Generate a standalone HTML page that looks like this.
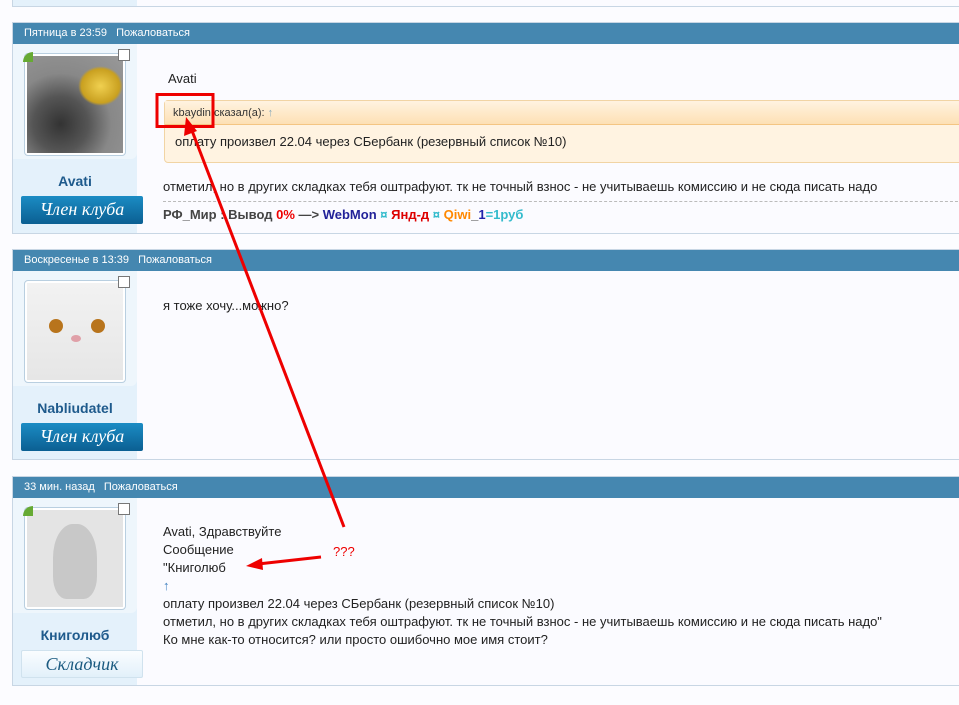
<!DOCTYPE html>
<html><head><meta charset="utf-8"><style>
*{margin:0;padding:0;box-sizing:border-box}
body{width:959px;height:705px;overflow:hidden;background:#fcfcff;font-family:"Liberation Sans",Arial,sans-serif;font-size:13px;color:#222;position:relative}
.post{position:absolute;left:12px;width:960px;border:1px solid #c8d6e4;background:#fbfbff}
.hd{height:21px;background:#4587b0;color:#fff;font-size:11px;line-height:21px;padding-left:11px}
.hd span{margin-left:6px}
.left{position:absolute;left:0;top:21px;bottom:0;width:124px;background:#e4f1fb}
.avbox{position:absolute;left:0;top:0;width:124px;height:115px;background:#eef6fc;border-radius:0 0 6px 0}
.av{position:absolute;left:11px;top:9px;width:102px;height:103px;border:1px solid #b9cfe0;border-radius:4px;background:#fff;padding:2px}
.av div{width:96px;height:97px}
.chk{position:absolute;left:105px;top:5px;width:12px;height:12px;border:1px solid #777;background:#fff}
.green{position:absolute;left:10px;top:8px;width:10px;height:10px;background:#6a3;border-radius:10px 0 0 0}
.name{position:absolute;left:0;top:129px;width:124px;text-align:center;color:#1e5a8c;font-weight:bold;font-size:14px}
.badge{position:absolute;left:8px;top:152px;width:122px;height:28px;background:linear-gradient(#1b8cc4,#0b5f92);color:#fff;font-family:"Liberation Serif",serif;font-style:italic;font-size:18px;text-align:center;line-height:27px;border-radius:2px}
.txt{position:absolute;left:150px;font-size:13px;color:#222}
</style></head><body>
<div style="position:absolute;left:12px;top:-2px;width:960px;height:9px;border:1px solid #c8d6e4;background:#fbfbff"><div style="width:124px;height:7px;background:#e4f1fb"></div></div>

<div class="post" style="top:22px;height:212px">
<div class="hd">Пятница в 23:59 <span>Пожаловаться</span></div>
<div class="left">
<div class="avbox"><div class="av"><div style="background:radial-gradient(circle at 35% 70%,#333 0,#555 30%,#888 55%,#999 100%);position:relative"><div style="position:absolute;right:0;top:10px;width:45px;height:40px;background:radial-gradient(#f0d050,#c9a020 60%,transparent 70%)"></div></div></div><div class="green"></div><div class="chk"></div></div>
<div class="name">Avati</div>
<div class="badge">Член клуба</div>
</div>
<div class="txt" style="left:155px;top:48px;font-size:13px">Avati</div>
<div style="position:absolute;left:151px;top:77px;width:810px;height:63px;border:1px solid #f1d4a4;border-radius:4px;background:#fff3e1">
<div style="height:24px;background:linear-gradient(#fff3e1,#fde0b4);border-bottom:1px solid #f4c582;font-size:11px;line-height:24px;padding-left:8px;color:#333">kbaydin сказал(а): <span style="color:#8ab">↑</span></div>
<div style="font-size:13px;padding:9px 0 0 10px">оплату произвел 22.04 через СБербанк (резервный список №10)</div>
</div>
<div class="txt" style="top:156px">отметил, но в других складках тебя оштрафуют. тк не точный взнос - не учитываешь комиссию и не сюда писать надо</div>
<div style="position:absolute;left:150px;top:178px;width:810px;border-top:1px dashed #bbb"></div>
<div class="txt" style="top:184px;font-weight:bold;color:#444">РФ_Мир : Вывод <span style="color:#e00">0%</span> —&gt; <span style="color:#229">WebMon</span> <span style="color:#3bc">¤</span> <span style="color:#d00">Янд-д</span> <span style="color:#3bc">¤</span> <span style="color:#f80">Qiwi</span>_<span style="color:#22a">1</span><span style="color:#3bc">=1руб</span></div>
</div>

<div class="post" style="top:249px;height:211px">
<div class="hd">Воскресенье в 13:39 <span>Пожаловаться</span></div>
<div class="left">
<div class="avbox"><div class="av"><div style="background:linear-gradient(#f2f2f2,#e6e6e6);position:relative"><div style="position:absolute;left:22px;top:36px;width:14px;height:14px;border-radius:50%;background:#b8741c"></div><div style="position:absolute;left:64px;top:36px;width:14px;height:14px;border-radius:50%;background:#b8741c"></div><div style="position:absolute;left:44px;top:52px;width:10px;height:7px;border-radius:50%;background:#e0a0a8"></div></div></div><div class="chk"></div></div>
<div class="name">Nabliudatel</div>
<div class="badge">Член клуба</div>
</div>
<div class="txt" style="top:48px">я тоже хочу...можно?</div>
</div>

<div class="post" style="top:476px;height:210px">
<div class="hd">33 мин. назад <span>Пожаловаться</span></div>
<div class="left">
<div class="avbox"><div class="av"><div style="background:#e4e4e4;position:relative"><div style="position:absolute;left:26px;top:14px;width:44px;height:75px;background:#c8c8c8;border-radius:45% 45% 30% 30%"></div></div></div><div class="green"></div><div class="chk"></div></div>
<div class="name">Книголюб</div>
<div class="badge" style="background:linear-gradient(#fafdff,#e2f0fa);color:#1a5a80;border:1px solid #d0e2ee">Складчик</div>
</div>
<div class="txt" style="top:46px;line-height:18px">Avati, Здравствуйте<br>Сообщение<br>"Книголюб<br><span style="color:#4080c0">↑</span><br>оплату произвел 22.04 через СБербанк (резервный список №10)<br>отметил, но в других складках тебя оштрафуют. тк не точный взнос - не учитываешь комиссию и не сюда писать надо"<br>Ко мне как-то относится? или просто ошибочно мое имя стоит?</div>
</div>

<svg style="position:absolute;left:0;top:0" width="959" height="705">
<rect x="157" y="94.5" width="56" height="32" fill="none" stroke="#e00" stroke-width="3"/>
<line x1="344" y1="527" x2="191" y2="128" stroke="#e00" stroke-width="3"/>
<polygon points="186,117 184,136 197,131" fill="#e00"/>
<line x1="321" y1="557" x2="258" y2="564" stroke="#e00" stroke-width="3"/>
<polygon points="246,566 262,558 263,570" fill="#e00"/>
<text x="333" y="556" fill="#e00" font-family="Liberation Sans" font-size="13">???</text>
</svg>
</body></html>
